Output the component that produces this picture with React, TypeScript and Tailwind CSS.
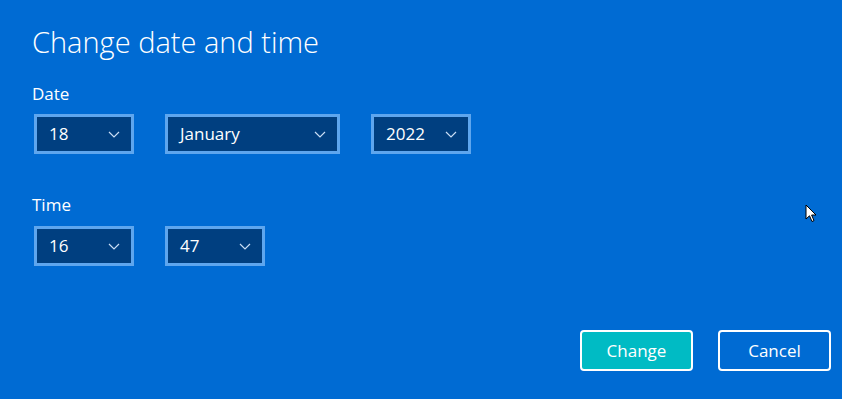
function Chevron() {
  return (
    <svg width="12" height="7" viewBox="0 0 12 7" className="text-[#c9def5]">
      <path d="M1 1 L6 6 L11 1" fill="none" stroke="currentColor" strokeWidth="1.2" />
    </svg>
  );
}

function Select({ value, width }: { value: string; width: string }) {
  return (
    <div
      className={`flex h-[40px] ${width} items-center justify-between border-[3px] border-[#5ea6ee] bg-[#003f80] pl-[12px] pr-[11px] text-[17px] text-white`}
    >
      <span>{value}</span>
      <Chevron />
    </div>
  );
}

export default function App() {
  return (
    <div
      className="relative flex h-[399px] w-[842px] flex-col bg-[#006bd3] pl-[34px] text-white"
      style={{ fontFamily: '"Open Sans", "Noto Sans", sans-serif' }}
    >
      <h1 className="-ml-[2px] mt-[23px] text-[29px] leading-[38px] font-light">Change date and time</h1>

      <div className="-ml-[2px] mt-[22px] text-[17px] leading-[22px]">Date</div>
      <div className="mt-[9px] flex gap-[31px]">
        <Select value="18" width="w-[100px]" />
        <Select value="January" width="w-[175px]" />
        <Select value="2022" width="w-[100px]" />
      </div>

      <div className="-ml-[2px] mt-[40px] text-[17px] leading-[22px]">Time</div>
      <div className="mt-[10px] flex gap-[31px]">
        <Select value="16" width="w-[100px]" />
        <Select value="47" width="w-[100px]" />
      </div>

      <div className="mt-auto mb-[28px] mr-[11px] flex justify-end gap-[25px]">
        <button
          type="button"
          className="h-[41px] w-[113px] rounded-[4px] border-2 border-white bg-[#00bbc4] text-[17px] text-white"
        >
          Change
        </button>
        <button
          type="button"
          className="h-[41px] w-[113px] rounded-[4px] border-2 border-white bg-transparent text-[17px] text-white"
        >
          Cancel
        </button>
      </div>

      <svg
        className="absolute left-[805px] top-[204px]"
        width="13"
        height="20"
        viewBox="0 0 13 20"
      >
        <path d="M1 1 L1 15 L4.5 11.8 L7 17.5 L9 16.6 L6.6 11 L11 11 Z" fill="white" stroke="black" strokeWidth="1" strokeLinejoin="round" />
      </svg>
    </div>
  );
}
